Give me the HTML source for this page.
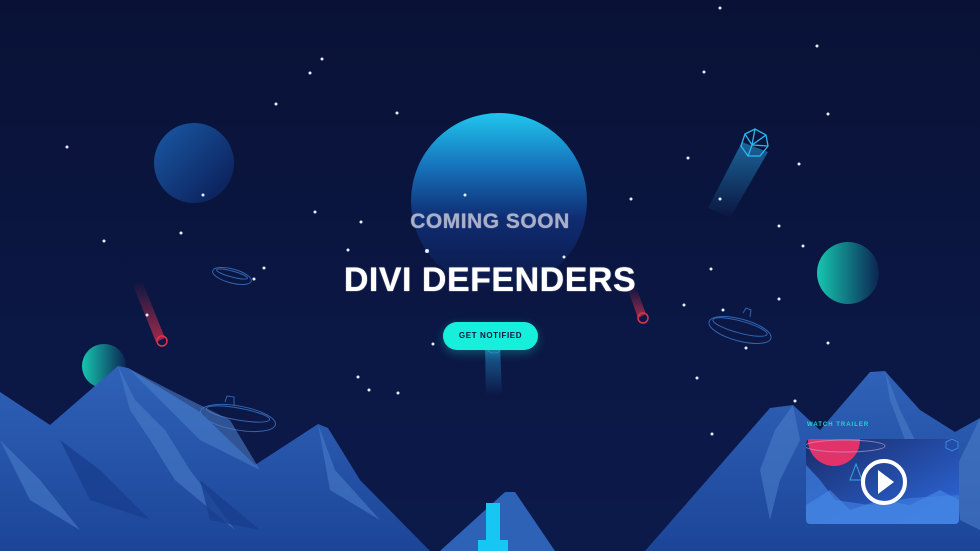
<!DOCTYPE html>
<html><head><meta charset="utf-8"><style>
html,body{margin:0;padding:0;width:980px;height:551px;overflow:hidden;background:#0a1440;font-family:"Liberation Sans",sans-serif}
.wrap{position:relative;width:980px;height:551px;background:linear-gradient(#091236,#0b1744 60%,#0c1a4a)}
svg{position:absolute;left:0;top:0}
.t{position:absolute;left:0;width:980px;text-align:center;font-weight:bold}
</style></head><body><div class="wrap">
<svg width="980" height="551" viewBox="0 0 980 551">
<defs>
<linearGradient id="pb" x1="0" y1="0" x2="0" y2="1"><stop offset="0" stop-color="#1fc6ee"/><stop offset=".3" stop-color="#1674bc"/><stop offset=".6" stop-color="#0f2c72"/><stop offset="1" stop-color="#0b1846"/></linearGradient>
<linearGradient id="ps" x1="0" y1="0" x2="1" y2="1"><stop offset="0" stop-color="#1a5aa6"/><stop offset="1" stop-color="#0a1a52"/></linearGradient>
<linearGradient id="pg" x1="0" y1="0" x2="1" y2="0"><stop offset="0" stop-color="#17c6b0"/><stop offset="1" stop-color="#0b2552"/></linearGradient>
<linearGradient id="tr" x1="0" y1="0" x2="0" y2="1"><stop offset="0" stop-color="#2aa6e6" stop-opacity=".55"/><stop offset="1" stop-color="#2aa6e6" stop-opacity="0"/></linearGradient>
<linearGradient id="rr" x1="0" y1="1" x2="0" y2="0"><stop offset="0" stop-color="#e0334c" stop-opacity=".7"/><stop offset="1" stop-color="#e0334c" stop-opacity="0"/></linearGradient>
<linearGradient id="mt" x1="0" y1="0" x2="0" y2="1"><stop offset="0" stop-color="#2f62b8"/><stop offset="1" stop-color="#1c4598"/></linearGradient>
<linearGradient id="vid" x1="0" y1="0" x2="1" y2="1"><stop offset="0" stop-color="#1a2c6a"/><stop offset="1" stop-color="#2d6ae0"/></linearGradient>
<clipPath id="vc"><rect x="806" y="439" width="153" height="85" rx="4"/></clipPath>
</defs>
<circle cx="499" cy="201" r="88" fill="url(#pb)"/>
<circle cx="194" cy="163" r="40" fill="url(#ps)"/>
<circle cx="848" cy="273" r="31" fill="url(#pg)"/>
<circle cx="104" cy="366" r="22" fill="url(#pg)"/>
<path d="M742 142 L768 152 L730 218 L708 208Z" fill="url(#tr)"/>
<g fill="none" stroke="#2bb8ee" stroke-width="1.3">
<path d="M745 134 L755 129 L766 135 L768 146 L760 156 L748 156 L741 146Z"/>
<path d="M745 134 L752 145 L766 135 M752 145 L748 156 M752 145 L768 146 M755 129 L752 145"/>
</g>
<path d="M485 345 L500 345 L502 395 L486 395Z" fill="url(#tr)"/>
<path d="M133 285 L142 281 L165 338 L156 342Z" fill="url(#rr)"/>
<circle cx="162" cy="341" r="5" fill="none" stroke="#e0334c" stroke-width="1.5"/>
<path d="M628 290 L636 287 L646 314 L638 318Z" fill="url(#rr)"/>
<circle cx="643" cy="318" r="5" fill="none" stroke="#e0334c" stroke-width="1.5"/>
<g fill="none" stroke="#3a74c4" stroke-width="1" opacity=".85">
<ellipse cx="740" cy="330" rx="32" ry="11" transform="rotate(15 740 330)"/><ellipse cx="740" cy="327" rx="28" ry="6" transform="rotate(15 740 327)"/><path d="M743 313 l3 -5 l5 2 l-1 7"/>
<ellipse cx="238" cy="418" rx="38" ry="12" transform="rotate(10 238 418)"/><ellipse cx="238" cy="414" rx="32" ry="6" transform="rotate(10 238 414)"/><path d="M225 402 l2 -6 l7 1 l0 9"/>
<ellipse cx="232" cy="276" rx="20" ry="7" transform="rotate(15 232 276)"/><ellipse cx="232" cy="274" rx="16" ry="3" transform="rotate(15 232 274)"/>
<ellipse cx="494" cy="350" rx="6" ry="3"/>
</g>
<g fill="#e6eefc">
<circle cx="720" cy="8" r="1.5"/><circle cx="322" cy="59" r="1.5"/><circle cx="310" cy="73" r="1.5"/><circle cx="817" cy="46" r="1.5"/><circle cx="704" cy="72" r="1.5"/><circle cx="276" cy="104" r="1.5"/><circle cx="397" cy="113" r="1.5"/><circle cx="828" cy="114" r="1.5"/><circle cx="67" cy="147" r="1.5"/><circle cx="688" cy="158" r="1.5"/><circle cx="799" cy="164" r="1.5"/><circle cx="203" cy="195" r="1.5"/><circle cx="465" cy="195" r="1.5"/><circle cx="720" cy="199" r="1.5"/><circle cx="631" cy="199" r="1.5"/><circle cx="315" cy="212" r="1.5"/><circle cx="361" cy="222" r="1.5"/><circle cx="181" cy="233" r="1.5"/><circle cx="348" cy="250" r="1.5"/><circle cx="104" cy="241" r="1.5"/><circle cx="803" cy="246" r="1.5"/><circle cx="564" cy="257" r="1.5"/><circle cx="427" cy="251" r="2"/><circle cx="779" cy="226" r="1.5"/><circle cx="711" cy="269" r="1.5"/><circle cx="264" cy="268" r="1.5"/><circle cx="254" cy="279" r="1.5"/><circle cx="684" cy="305" r="1.5"/><circle cx="779" cy="299" r="1.5"/><circle cx="147" cy="315" r="1.5"/><circle cx="723" cy="310" r="1.5"/><circle cx="828" cy="343" r="1.5"/><circle cx="433" cy="344" r="1.5"/><circle cx="746" cy="348" r="1.5"/><circle cx="358" cy="377" r="1.5"/><circle cx="369" cy="390" r="1.5"/><circle cx="398" cy="393" r="1.5"/><circle cx="697" cy="378" r="1.5"/><circle cx="712" cy="434" r="1.5"/><circle cx="795" cy="401" r="1.5"/>
</g>
<path d="M0 392 L50 425 L118 366 L128 368 L200 412 L255 465 L318 424 L328 428 L360 480 L430 551 L0 551Z" fill="url(#mt)"/>
<path d="M118 366 L135 400 L165 430 L190 470 L235 530 L175 480 L150 440 L130 410Z M0 440 L40 480 L80 530 L30 500Z M318 424 L335 470 L380 520 L330 490Z M128 368 L170 390 L230 420 L260 470 L200 440Z" fill="#4a7cc8" opacity=".6"/>
<path d="M60 440 L100 470 L150 520 L90 500Z M200 480 L260 530 L210 520Z" fill="#173c8c" opacity=".7"/>
<path d="M440 551 L505 492 L515 492 L555 551Z" fill="#2d62b6"/>
<path d="M645 551 L770 408 L793 405 L820 430 L870 372 L885 371 L920 410 L955 432 L980 418 L980 551Z" fill="url(#mt)"/>
<path d="M793 405 L800 440 L780 480 L770 520 L760 470 L775 430Z M885 371 L900 410 L930 470 L905 440 L890 400Z M980 418 L955 470 L960 520 L980 530Z" fill="#4a7cc8" opacity=".6"/>
<rect x="486" y="503" width="14" height="40" fill="#17c6f2"/>
<rect x="478" y="540" width="30" height="11" fill="#17c6f2"/>
<rect x="806" y="439" width="153" height="85" rx="4" fill="url(#vid)"/>
<g clip-path="url(#vc)">
<circle cx="834" cy="440" r="26" fill="#e0336a"/>
<ellipse cx="845" cy="446" rx="40" ry="6" fill="none" stroke="#c6a7d8" stroke-width="1" opacity=".6"/>
<path d="M806 465 L820 480 L835 500 L870 505 L910 498 L959 495 L959 524 L806 524Z" fill="#3a78d8" opacity=".8"/>
<path d="M806 505 L830 490 L850 510 L880 500 L910 505 L940 490 L959 500 L959 524 L806 524Z" fill="#4a8ae8" opacity=".6"/>
<path d="M850 480 L856 464 L862 480Z" fill="none" stroke="#3aa8e0"/>
<path d="M946 442 l6 -3 l6 3 l0 6 l-6 3 l-6 -3Z" fill="none" stroke="#3a8ae0"/>
</g>
<circle cx="884" cy="482" r="21" fill="none" stroke="#fff" stroke-width="4"/>
<path d="M878 470 L894 482 L878 494Z" fill="#fff"/>
</svg>
<div class="t" style="top:210px;font-size:21px;color:#aab0c8;letter-spacing:.5px;text-shadow:0 0 1px #aab0c8">COMING SOON</div>
<div class="t" style="top:261px;font-size:34px;color:#fff;letter-spacing:.5px;text-shadow:0 0 1px #fff">DIVI DEFENDERS</div>
<div style="position:absolute;left:443px;top:322px;width:95px;height:28px;border-radius:14px;background:#17eedb;color:#0a1a40;font-size:8px;font-weight:bold;text-align:center;line-height:28px;letter-spacing:.6px;box-shadow:0 3px 10px rgba(23,238,219,.3)">GET NOTIFIED</div>
<div style="position:absolute;left:807px;top:422px;font-size:6px;font-weight:bold;color:#1fd7d0;letter-spacing:1px">WATCH TRAILER</div>
</div></body></html>
